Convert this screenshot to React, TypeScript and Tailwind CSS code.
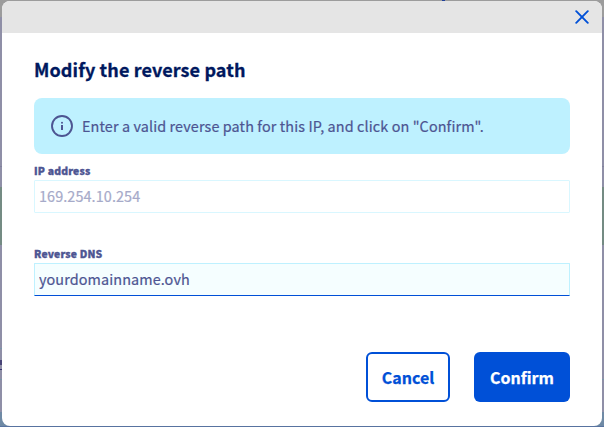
import React from "react";

type FieldProps = { id: string; label: string; value: string; disabled?: boolean };

function Field({ id, label, value, disabled }: FieldProps) {
  return (
    <div className="flex flex-col">
      <label
        htmlFor={id}
        className="h-[18px] text-[10.4px] leading-[17px] font-black tracking-[0.18px] text-[#4d5592] [-webkit-text-stroke:0.35px_#4d5592]"
      >
        {label}
      </label>
      <input
        id={id}
        defaultValue={value}
        disabled={disabled}
        className={
          disabled
            ? "h-[33px] w-full rounded-[1px] border border-[#d9f7ff] bg-white px-1 pb-[2px] text-[14.4px] tracking-[0.1px] text-[#a6aac9] [-webkit-text-stroke:0.2px_#a6aac9]"
            : "h-[33px] w-full rounded-t-[1px] border border-[#bef1ff] border-b-[#0050d7] bg-[#f5feff] px-1 pb-[2px] text-[14.4px] tracking-[0.1px] text-[#4d5592] outline-none [-webkit-text-stroke:0.2px_#4d5592]"
        }
      />
    </div>
  );
}

function Backdrop() {
  return (
    <div className="absolute inset-0 flex flex-col bg-[#8f8fa7]">
      <div className="h-[17px] bg-[#9c9c9c] pl-[442px]">
        <div className="h-px w-[3px] bg-[#20419a]" />
      </div>
      <div className="h-[149px]" />
      <div className="h-[21px] border-t border-[#81819d]" />
      <div className="h-[58px] bg-[#748b83]" />
      <div className="h-[103px]" />
      <div className="h-px w-[2px] bg-[#7896a8]" />
      <div className="h-[11px]" />
      <div className="h-[5px] w-[2px] bg-[#484477]" />
      <div className="h-[4px]" />
      <div className="h-px w-[2px] bg-[#353071]" />
      <div className="h-[9px]" />
      <div className="h-px bg-[#7896a8]" />
      <div className="h-[32px]" />
      <div className="grow bg-[#6f8aa5]" />
      <div className="h-px bg-[#5873a0]" />
    </div>
  );
}

export default function App() {
  return (
    <div className="relative h-[427px] w-[604px] overflow-hidden px-[2px] pt-px font-['Noto_Sans_CJK_SC','Noto_Sans',sans-serif]">
      <Backdrop />
      <div role="dialog" aria-labelledby="title" className="relative flex h-[425px] flex-col overflow-hidden rounded-[8px] bg-white">
        <header className="flex h-8 shrink-0 items-center justify-end bg-[#e5e5e5] pr-[13px]">
          <button aria-label="Close">
            <svg width="14" height="14" viewBox="0 0 14 14" fill="none" stroke="#0050d7" strokeWidth="1.9" strokeLinecap="round">
              <path d="M1.2 1.2l11.6 11.6M12.8 1.2L1.2 12.8" />
            </svg>
          </button>
        </header>
        <main className="flex flex-col px-8">
          <h1
            id="title"
            className="mt-[22px] h-7 text-[18px] leading-7 font-bold tracking-[0.11px] text-[#00185e] [-webkit-text-stroke:0.3px_#00185e]"
          >
            Modify the reverse path
          </h1>
          <div className="mt-[15px] flex h-14 items-center rounded-[8px] bg-[#bef1ff] pl-[17px] text-[14.4px] text-[#4d5592]">
            <svg width="22" height="22" viewBox="0 0 22 22" fill="none" className="mr-[9px] shrink-0">
              <circle cx="11" cy="11" r="10" stroke="#4d5592" strokeWidth="1.9" />
              <path d="M11 10v5" stroke="#4d5592" strokeWidth="2" />
              <circle cx="11" cy="7.7" r="1" fill="#4d5592" />
            </svg>
            <span className="whitespace-nowrap tracking-[0.11px] [-webkit-text-stroke:0.2px_#4d5592]">
              Enter a valid reverse path for this IP, and click on "Confirm".
            </span>
          </div>
          <div className="mt-2 flex flex-col gap-8">
            <Field id="ip" label="IP address" value="169.254.10.254" disabled />
            <Field id="dns" label="Reverse DNS" value="yourdomainname.ovh" />
          </div>
          <div className="mt-14 flex justify-end gap-6 text-[16px] font-bold">
            <button className="h-[50px] w-[84px] rounded-[6px] border-2 border-[#0050d7] text-[#0050d7] [-webkit-text-stroke:0.25px_#0050d7]">
              Cancel
            </button>
            <button className="h-[50px] w-24 rounded-[6px] bg-[#0050d7] text-white [-webkit-text-stroke:0.25px_#ffffff]">
              Confirm
            </button>
          </div>
        </main>
      </div>
    </div>
  );
}
